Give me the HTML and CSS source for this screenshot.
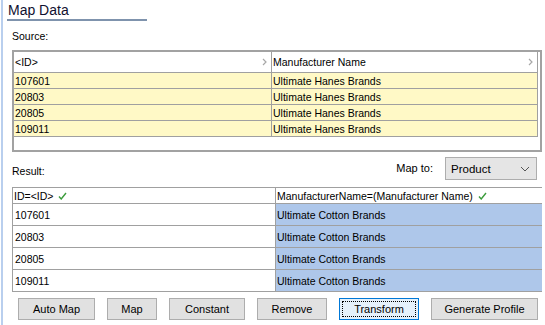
FILE: index.html
```html
<!DOCTYPE html>
<html>
<head>
<meta charset="utf-8">
<link rel="stylesheet" href="styles.css">
</head>
<body>
<div class="page">
  <div class="title">Map Data</div>
  <div class="label source-label">Source:</div>
  <div class="src-grid">
    <div class="src-table">
      <div class="src-row head">
        <div class="cell c1"><span>&lt;ID&gt;</span><svg class="chev" width="5" height="8" viewBox="0 0 5 8"><polyline points="1,1 4,4 1,7" fill="none" stroke="#a8a8a8" stroke-width="1.2"/></svg></div>
        <div class="cell c2"><span>Manufacturer Name</span><svg class="chev" width="5" height="8" viewBox="0 0 5 8"><polyline points="1,1 4,4 1,7" fill="none" stroke="#a8a8a8" stroke-width="1.2"/></svg></div>
      </div>
      <div class="src-row data"><div class="cell c1">107601</div><div class="cell c2">Ultimate Hanes Brands</div></div>
      <div class="src-row data"><div class="cell c1">20803</div><div class="cell c2">Ultimate Hanes Brands</div></div>
      <div class="src-row data"><div class="cell c1">20805</div><div class="cell c2">Ultimate Hanes Brands</div></div>
      <div class="src-row data"><div class="cell c1">109011</div><div class="cell c2">Ultimate Hanes Brands</div></div>
    </div>
  </div>
  <div class="result-bar">
    <span class="label">Result:</span>
    <div class="mapto">
      <span class="label">Map to:</span>
      <div class="select"><span>Product</span><svg width="10" height="6" viewBox="0 0 10 6"><polyline points="1,1 5,5 9,1" fill="none" stroke="#555" stroke-width="1"/></svg></div>
    </div>
  </div>
  <div class="res-grid">
    <div class="res-row head">
      <div class="cell c1">ID=&lt;ID&gt;<svg class="check" width="9" height="8" viewBox="0 0 9 8"><polyline points="1,4.5 3.2,7 8,1" fill="none" stroke="#3c9c3c" stroke-width="1.4"/></svg></div>
      <div class="cell c2">ManufacturerName=(Manufacturer Name)<svg class="check" width="9" height="8" viewBox="0 0 9 8"><polyline points="1,4.5 3.2,7 8,1" fill="none" stroke="#3c9c3c" stroke-width="1.4"/></svg></div>
    </div>
    <div class="res-row data"><div class="cell c1">107601</div><div class="cell c2">Ultimate Cotton Brands</div></div>
    <div class="res-row data"><div class="cell c1">20803</div><div class="cell c2">Ultimate Cotton Brands</div></div>
    <div class="res-row data"><div class="cell c1">20805</div><div class="cell c2">Ultimate Cotton Brands</div></div>
    <div class="res-row data"><div class="cell c1">109011</div><div class="cell c2">Ultimate Cotton Brands</div></div>
  </div>
  <div class="buttons">
    <div class="btn w-auto">Auto Map</div>
    <div class="btn w-map">Map</div>
    <div class="btn w-const">Constant</div>
    <div class="btn w-remove">Remove</div>
    <div class="btn w-transform focused">Transform</div>
    <div class="btn w-gen">Generate Profile</div>
  </div>
</div>
</body>
</html>
```
FILE: styles.css
```css
* { box-sizing: border-box; }
html, body { margin: 0; padding: 0; background: #fff; }
body {
  font-family: "Liberation Sans", Arial, sans-serif;
  font-size: 10.5px;
  color: #000;
  width: 545px;
  height: 325px;
  overflow: hidden;
}
.page {
  margin-left: 1px;
  border-left: 2px solid #b9cfee;
  height: 325px;
}
.title {
  margin-left: 4px;
  width: 140px;
  height: 21px;
  padding-left: 1px;
  padding-top: 2px;
  font-size: 14px;
  line-height: 16px;
  color: #101030;
  border-bottom: 2px solid #7f93ad;
}
.label { line-height: 13px; }
.source-label {
  margin: 9px 0 0 9px;
  height: 20px;
}
.src-grid {
  margin-left: 9px;
  width: 530px;
  height: 102px;
  border: 2px solid #a2a2a2;
  background: #fff;
}
.src-table {
  width: 524px;
  border-right: 1px solid #a0a0a0;
}
.src-row {
  display: grid;
  grid-template-columns: 258px 1fr;
  border-bottom: 1px solid #a0a0a0;
}
.src-row.head { height: 21px; }
.src-row.data { height: 16px; background: #fff9c6; }
.cell {
  display: flex;
  align-items: center;
  padding-left: 1px;
  white-space: nowrap;
  overflow: hidden;
}
.src-row .c1 { border-right: 1px solid #a0a0a0; }
.src-row.head .cell { justify-content: space-between; padding-right: 4px; }
.chev { flex: none; }
.result-bar {
  margin: 4px 8px 0 9px;
  height: 25px;
  display: flex;
  align-items: center;
  justify-content: space-between;
}
.result-bar > .label { padding-top: 5px; }
.mapto { display: flex; align-items: center; gap: 12px; }
.mapto .label { font-size: 11px; }
.select {
  width: 92px;
  height: 23px;
  border: 1px solid #adadad;
  background: #e5e5e5;
  display: flex;
  align-items: center;
  justify-content: space-between;
  padding: 0 6px 0 5px;
  font-size: 11.5px;
}
.res-grid {
  margin: 6px 0 0 9px;
  width: 530px;
  border-top: 1px solid #a0a0a0;
  border-left: 1px solid #a0a0a0;
}
.res-row {
  display: grid;
  grid-template-columns: 263px 1fr;
  border-bottom: 1px solid #a0a0a0;
}
.res-row.head { height: 16px; }
.res-row.data { height: 22px; }
.res-row .c1 { border-right: 1px solid #a0a0a0; background: #fff; }
.res-row.data .c1 { padding-left: 2px; }
.res-row.data .c2 { background: #aec7ea; }
.check { margin-left: 5px; flex: none; }
.buttons {
  margin: 6px 0 0 15px;
  display: flex;
  gap: 12px;
}
.btn {
  height: 22px;
  border: 1px solid #adadad;
  background: #e1e1e1;
  display: flex;
  align-items: center;
  justify-content: center;
  font-size: 11px;
  position: relative;
}
.w-auto { width: 77px; }
.w-map { width: 50px; }
.w-const { width: 76px; }
.w-remove { width: 70px; }
.w-transform { width: 80px; }
.w-gen { width: 107px; }
.btn.focused {
  border-color: #0078d7;
  background: #e5f1fb;
}
.btn.focused::after {
  content: "";
  position: absolute;
  inset: 2px;
  border: 1px dotted #000;
}
```
